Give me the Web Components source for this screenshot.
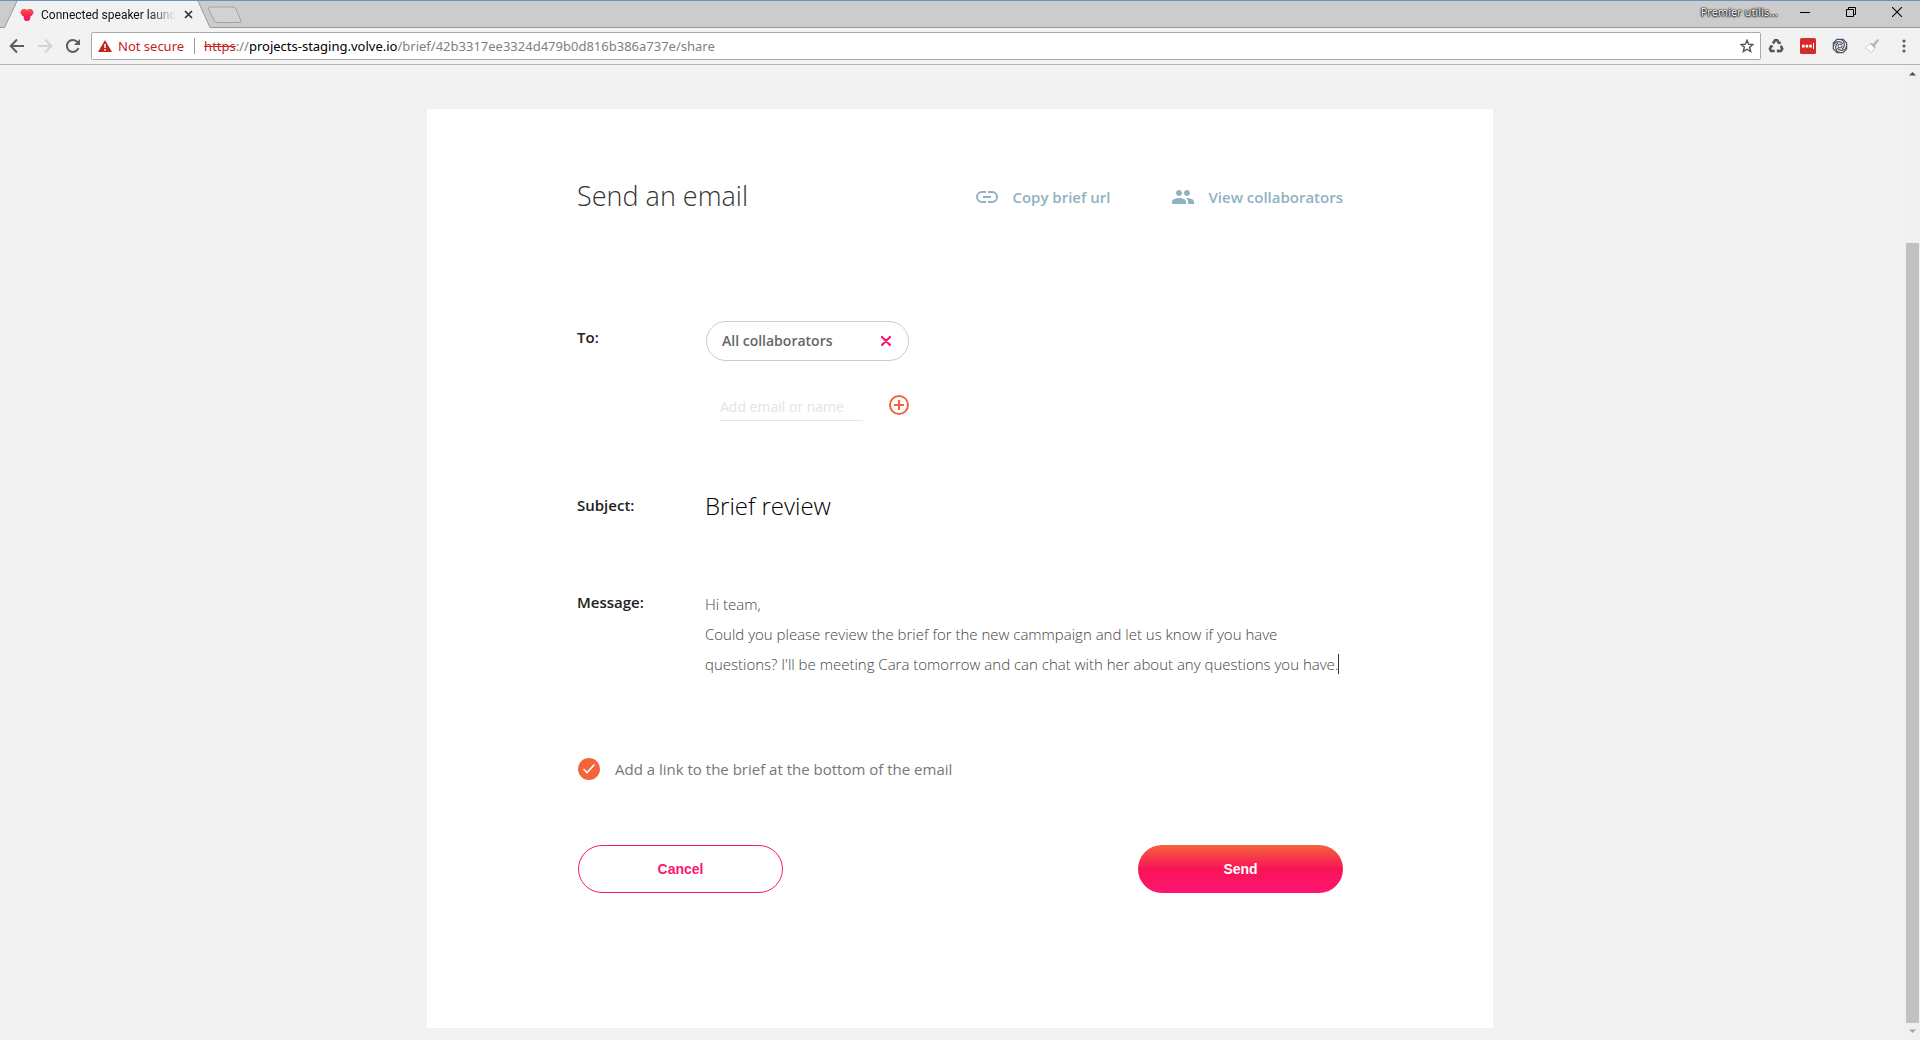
<!DOCTYPE html>
<html lang="en">
<head>
<meta charset="utf-8">
<title>Connected speaker launch</title>
<style>
  html, body { height: 100%; margin: 0; }
  body { font-family: "Open Sans", "Noto Sans", sans-serif; background: #f2f2f2; overflow: hidden; }
</style>
</head>
<body>
<app-window></app-window>

<script>
const define = (name, html) => customElements.define(name, class extends HTMLElement {
  constructor() {
    super();
    this.attachShadow({ mode: 'open' }).innerHTML = html;
  }
});

/* Tab strip with the active tab, the new-tab button and window controls */
define('tab-strip', `
<style>
  :host { display: flex; align-items: stretch; height: 28px; box-sizing: border-box; background: #ccc;
    border-top: 1px solid #6f90c0; box-shadow: inset 0 -1px #999; font-family: "Noto Sans", sans-serif; }
  .tab { position: relative; display: flex; align-items: center; width: 211px; box-sizing: border-box; padding: 0 15px 0 20px; }
  .shape { position: absolute; inset: 0; width: 211px; height: 27px; }
  .heart { position: relative; width: 14px; height: 14px; flex: none; }
  .title { position: relative; flex: 1; margin-left: 7px; white-space: nowrap; font-family: Roboto, sans-serif; font-size: 12px; line-height: 20px; color: #111;
    -webkit-mask-image: linear-gradient(90deg, #000 80%, transparent); mask-image: linear-gradient(90deg, #000 80%, transparent); }
  button { border: 0; padding: 0; background: none; display: flex; align-items: center; justify-content: center; }
  .close { position: relative; width: 16px; margin-left: 4px; }
  .new { margin-left: -4px; align-self: center; }
  .space { flex: 1; }
  .user { align-self: center; font-size: 11px; line-height: 16px; margin: 0 4px 5px 0; color: #fff;
    text-shadow: 0 0 1px #000, 0 0 1px #000, 0 0 2px #222, 0 1px 2px #333; }
  .win { width: 46px; padding-bottom: 5px; }
</style>
<div class="tab">
  <svg class="shape" viewBox="0 0 211 27" aria-hidden="true"><path d="M0 27L4.500 26.500L17 0H198L210 26.500H211V27Z" fill="#f2f2f2"/><path d="M0 26.500H4.500L17.500-1M197.500-1L210 26.500H211" fill="none" stroke="#999"/></svg>
  <svg class="heart" viewBox="0 0 14 14" aria-hidden="true"><defs><linearGradient id="h" x2="0" y2="1"><stop stop-color="#f4603c"/><stop offset=".6" stop-color="#fa1a60"/><stop offset="1" stop-color="#fb1680"/></linearGradient></defs><path d="M2.500 1H5.500L7 2L8.500 1H11.500L13.500 3.500V5L11.500 8H10.500L10 11.500L8.500 13H5.500L4 11.500L3.500 8H2.500L.500 5V3.500Z" fill="url(#h)"/></svg>
  <span class="title">Connected speaker launc</span>
  <button class="close" aria-label="Close tab"><svg width="9" height="9" viewBox="0 0 9 9"><path d="M1 1L8 8M8 1L1 8" stroke="#333" stroke-width="1.700"/></svg></button>
</div>
<button class="new" aria-label="New tab"><svg width="36" height="18" viewBox="0 0 36 18"><path d="M3 1H26Q28 1 29 3L34 15Q34.500 16.500 33 16.500H10Q8 16.500 7 14.500L1.500 3Q1 1 3 1Z" fill="#d2d2d2" stroke="#a2a2a2"/></svg></button>
<span class="space"></span>
<span class="user">Premier utilis...</span>
<button class="win" aria-label="Minimize"><svg width="10" height="10" viewBox="0 0 10 10"><path d="M0 5.500H10" stroke="#000"/></svg></button>
<button class="win" aria-label="Restore"><svg width="10" height="10" viewBox="0 0 10 10"><path d="M.500 2.500H7.500V9.500H.500ZM2.500 2.500V.500H9.500V7.500H7.500" fill="none" stroke="#000"/></svg></button>
<button class="win" aria-label="Close"><svg width="10" height="10" viewBox="0 0 10 10"><path d="M0 0L10 10M10 0L0 10" stroke="#000" stroke-width="1.100"/></svg></button>
`);

/* Navigation bar with the address box and extension icons */
define('nav-bar', `
<style>
  :host { display: flex; align-items: center; height: 37px; box-sizing: border-box; padding: 0 4px 1px 5px; background: #f2f2f2;
    border-bottom: 1px solid #b3b3b3; font-family: "Noto Sans", sans-serif; }
  button { border: 0; padding: 0; background: none; width: 24px; height: 24px; display: flex; align-items: center; justify-content: center; }
  .nav { display: flex; gap: 4px; margin-right: 6px; }
  .box { flex: 1; display: flex; align-items: center; height: 28px; box-sizing: border-box; border: 1px solid #aaa; border-radius: 2px; background: #fff;
    padding: 0 1px 0 6px; font-size: 13px; line-height: 20px; white-space: nowrap; }
  .warn { color: #c5221f; display: flex; align-items: center; gap: 6px; padding-right: 10px; border-right: 1px solid #999; line-height: 16px; margin-right: 9px; }
  .url { flex: 1; color: #808080; }
  s { color: #c5221f; }
  b { font-weight: 400; color: #000; }
  .ext { display: flex; gap: 8px; margin-left: 3px; }
</style>
<div class="nav">
  <button aria-label="Back"><svg width="16" height="16" viewBox="0 0 16 16"><path d="M15 8H2M8 1.500L1.700 8L8 14.500" fill="none" stroke="#5a5d61" stroke-width="2"/></svg></button>
  <button aria-label="Forward"><svg width="16" height="16" viewBox="0 0 16 16"><path d="M1 8H14M8 1.500L14.300 8L8 14.500" fill="none" stroke="#d3d4d5" stroke-width="2"/></svg></button>
  <button aria-label="Reload"><svg width="16" height="16" viewBox="0 0 16 16"><path d="M13.500 10A6 6 0 1 1 12.600 4.200" fill="none" stroke="#5a5d61" stroke-width="2"/><path d="M15 1V7H9Z" fill="#5a5d61"/></svg></button>
</div>
<div class="box">
  <span class="warn"><svg width="14" height="14" viewBox="0 0 14 14" aria-hidden="true"><path d="M7 1L14 13H0Z" fill="#c5221f"/><path d="M7 5V9M7 10V11.700" stroke="#fff" stroke-width="1.600"/></svg>Not secure</span>
  <span class="url"><s>https</s>://<b>projects-staging.volve.io</b>/brief/42b3317ee3324d479b0d816b386a737e/share</span>
  <button aria-label="Bookmark"><svg width="14" height="14" viewBox="0 0 14 14"><path d="M7 1.300L8.600 5.200L12.900 5.500L9.600 8.300L10.700 12.500L7 10.200L3.300 12.500L4.400 8.300L1.100 5.500L5.400 5.200Z" fill="none" stroke="#4d5055" stroke-width="1.400"/></svg></button>
</div>
<div class="ext">
  <button aria-label="Recycle"><svg width="16" height="16" viewBox="0 0 16 16" fill="none" stroke="#4d5865" stroke-width="2.600"><path d="M5 5.500L7 2.200H9.200L11 5.200"/><path d="M12.800 7.800L14.200 10.700L13 13H9.500"/><path d="M6.700 13H3L1.900 10.700L3.500 8"/><path d="M9.300 5.800L12.500 6.300L13 3.300ZM10.300 10.800L8.500 13L10.300 15.200ZM1.200 8.200L4 6.800L5.500 9.200Z" fill="#4d5865" stroke="none"/></svg></button>
  <button aria-label="Passwords"><svg width="16" height="16" viewBox="0 0 16 16"><rect width="16" height="16" rx="1.500" fill="#d32d27"/><path d="M2 6.800H4.600V9.400H2ZM5.600 6.800H8.200V9.400H5.600ZM9.200 6.800H11.800V9.400H9.200ZM13 5H14V11H13Z" fill="#fff"/></svg></button>
  <button aria-label="Swirl"><svg width="16" height="16" viewBox="0 0 16 16" fill="none" stroke="#4d5865" stroke-width="1.200"><path d="M5 1.300H11L14.700 5V11L11 14.700H5L1.300 11V5Z"/><path d="M1.500 8C2 3.500 8 2 11 6M8 1.500C12.500 2 14 8 10 11M14.500 8C14 12.500 8 14 5 10M8 14.500C3.500 14 2 8 6 5"/><path d="M6 8C6 6 9 5.500 10 7.500M10 8C10 10 7 10.500 6 8.500"/></svg></button>
  <button aria-label="Clean"><svg width="16" height="16" viewBox="0 0 16 16"><path d="M8.500 6.500L13 1.500Q15 .500 15 2.500L10.500 8Z" fill="#b5b5b5"/><path d="M7 5.500L11 9.500L7.500 14.500L1 9.500Z" fill="#fff" stroke="#d0d0d0"/><path d="M7 5.500L11 9.500" stroke="#aaa" stroke-width="1.400"/></svg></button>
  <button aria-label="Menu"><svg width="4" height="14" viewBox="0 0 4 14" fill="#5a5d61"><circle cx="2" cy="2" r="1.600"/><circle cx="2" cy="7" r="1.600"/><circle cx="2" cy="12" r="1.600"/></svg></button>
</div>
`);

define('scroll-track', `
<style>
  :host { display: flex; flex-direction: column; align-items: center; width: 16px; background: #f0f0f0; }
  svg { flex: none; margin: 5px 0; }
  .before { flex: 162; }
  .thumb { flex: 782; width: 13px; background: #c1c1c1; }
</style>
<svg width="7" height="7" viewBox="0 0 7 7"><path d="M0 5.500L3.500 2L7 5.500Z" fill="#505050"/></svg>
<div class="before"></div><div class="thumb"></div>
<svg width="7" height="7" viewBox="0 0 7 7"><path d="M0 1.500L3.500 5L7 1.500Z" fill="#a3a3a3"/></svg>
`);

define('icon-link', `
<style>
  :host { display: block; }
  a { display: flex; align-items: center; gap: 14px; color: #8fb2c0; font-size: 15px; font-weight: 600; line-height: 20px; text-decoration: none; }
</style>
<a href="#"><slot name="icon"></slot><slot></slot></a>
`);

define('recipient-chip', `
<style>
  :host { display: flex; align-items: center; justify-content: space-between; width: 203px; height: 40px; box-sizing: border-box; padding: 0 12px 0 15px;
    border: 1px solid #ccc; border-radius: 20px; color: #666; font-size: 14px; font-weight: 600; line-height: 20px; }
  button { display: flex; align-items: center; justify-content: center; width: 20px; height: 20px; border: 0; padding: 0; background: none; }
</style>
<slot></slot>
<button type="button" aria-label="Remove"><svg width="10" height="10" viewBox="0 0 10 10"><path d="M1 1L9 9M9 1L1 9" stroke="#f9166f" stroke-width="2.200" stroke-linecap="round"/></svg></button>
`);

define('pill-button', `
<style>
  :host { display: block; width: 205px; }
  button { width: 100%; height: 48px; border: 1px solid #fa1670; border-radius: 24px; background: #fff; color: #fa1670;
    font: bold 14px/20px "Liberation Sans", sans-serif; }
  :host([primary]) button { border: 0; color: #fff; background: linear-gradient(#f4643c, #fa1356 50%, #fb1672); }
</style>
<button type="button"><slot></slot></button>
`);

/* A caption column followed by its field */
define('form-row', `
<style>
  :host { display: flex; align-items: flex-start; }
  .caption { width: 128px; flex: none; }
  .field { flex: 1; min-width: 0; }
</style>
<div class="caption"><slot name="label"></slot></div>
<div class="field"><slot></slot></div>
`);

define('email-form', `
<style>
  :host { display: block; box-sizing: border-box; padding: 68px 150px 135px; background: #fff; }
  header { display: flex; align-items: flex-start; height: 40px; }
  h1 { flex: 1; margin: 0; font-size: 27px; line-height: 38px; font-weight: 300; color: #333; }
  nav { display: flex; align-items: center; gap: 62px; height: 40px; }
  label { font-size: 15px; line-height: 20px; color: #222; font-weight: 600; }
  label.lead { display: block; }
  .to { margin-top: 104px; }
  .to label { padding-top: 6px; }
  recipient-chip, .add { margin-left: 1px; }
  .add { display: flex; align-items: center; justify-content: space-between; width: 203px; height: 28px; margin-top: 32px; box-sizing: border-box; padding-left: 14px; }
  input, textarea { box-sizing: border-box; border: 0; border-radius: 0; padding: 0; margin: 0; outline: 0; background: none; font-family: inherit; }
  .add input { width: 143px; height: 28px; border-bottom: 1px solid #e4e4e4; padding-bottom: 1px; font-size: 14px; color: #666; }
  .add input::placeholder { color: #e4e4e4; opacity: 1; }
  .add button { display: flex; border: 0; padding: 0; background: none; margin-bottom: 5px; }
  .subject { margin-top: 64px; align-items: center; }
  .subject input { display: block; width: 100%; height: 40px; font-size: 24px; font-weight: 300; color: #000; }
  .message { margin-top: 64px; }
  .message label { padding-top: 3px; }
  .write { position: relative; }
  textarea { display: block; width: 100%; height: 90px; resize: none; overflow: hidden; font-size: 15px; line-height: 30px; font-weight: 300; color: #444; }
  .caret { position: absolute; right: 4px; bottom: 5px; width: 1px; height: 20px; background: #333; }
  .check { display: flex; align-items: center; gap: 15px; margin-top: 79px; height: 22px; padding-left: 1px; }
  .check input { appearance: none; width: 22px; height: 22px; border-radius: 50%; }
  .check input:checked { background: #f4643c; }
  .tick { display: grid; }
  .tick > * { grid-area: 1 / 1; place-self: center; }
  .tick svg { pointer-events: none; }
  .check label { font-size: 15px; color: #777; font-weight: 400; }
  footer { display: flex; justify-content: space-between; margin-top: 65px; padding-left: 1px; }
</style>
<header>
  <h1>Send an email</h1>
  <nav>
    <icon-link><svg slot="icon" width="22" height="12" viewBox="0 0 22 12" aria-hidden="true"><path d="M10 1H6A5 5 0 0 0 6 11H10M12 1H16A5 5 0 0 1 16 11H12M7 6H15" fill="none" stroke="#8fb2c0" stroke-width="2"/></svg>Copy brief url</icon-link>
    <icon-link><svg slot="icon" width="22" height="14" viewBox="1 5 22 14" aria-hidden="true"><path d="M16 11c1.660 0 2.990-1.340 2.990-3S17.660 5 16 5s-3 1.340-3 3 1.340 3 3 3zm-8 0c1.660 0 2.990-1.340 2.990-3S9.660 5 8 5 5 6.340 5 8s1.340 3 3 3zm0 2c-2.330 0-7 1.170-7 3.500V19h14v-2.500c0-2.330-4.670-3.500-7-3.500zm8 0c-.290 0-.620.020-.970.050 1.160.840 1.970 1.970 1.970 3.450V19h6v-2.500c0-2.330-4.670-3.500-7-3.500z" fill="#8fb2c0"/></svg>View collaborators</icon-link>
  </nav>
</header>
<form-row class="to">
  <label slot="label" class="lead" for="who">To:</label>
  <recipient-chip>All collaborators</recipient-chip>
  <div class="add">
    <input id="who" type="text" placeholder="Add email or name">
    <button type="button" aria-label="Add recipient"><svg width="20" height="20" viewBox="0 0 20 20"><circle cx="10" cy="10" r="9" fill="none" stroke="#f4643c" stroke-width="2"/><path d="M10 5V15M5 10H15" stroke="#f4643c" stroke-width="2"/></svg></button>
  </div>
</form-row>
<form-row class="subject">
  <label slot="label" class="lead" for="subject">Subject:</label>
  <input id="subject" type="text" value="Brief review">
</form-row>
<form-row class="message">
  <label slot="label" class="lead" for="message">Message:</label>
  <div class="write">
    <textarea id="message" spellcheck="false">Hi team,
Could you please review the brief for the new cammpaign and let us know if you have
questions? I'll be meeting Cara tomorrow and can chat with her about any questions you have.</textarea>
    <span class="caret"></span>
  </div>
</form-row>
<div class="check">
  <span class="tick"><input id="link" type="checkbox" checked><svg width="12" height="10" viewBox="0 0 12 10" aria-hidden="true"><path d="M1 5.500L4 8.500L11 1" fill="none" stroke="#fff" stroke-width="1.600" stroke-linecap="round"/></svg></span>
  <label for="link">Add a link to the brief at the bottom of the email</label>
</div>
<footer>
  <pill-button>Cancel</pill-button>
  <pill-button primary>Send</pill-button>
</footer>
`);

define('app-window', `
<style>
  :host { display: flex; flex-direction: column; height: 100vh; background: #f2f2f2; }
  .view { flex: 1; min-height: 0; display: flex; }
  main { flex: 1; overflow: hidden; padding: 44px 0 0 16px; }
  email-form { max-width: 1066px; margin: 0 auto; }
</style>
<tab-strip></tab-strip>
<nav-bar></nav-bar>
<div class="view">
  <main><email-form></email-form></main>
  <scroll-track></scroll-track>
</div>
`);
</script>
</body>
</html>
